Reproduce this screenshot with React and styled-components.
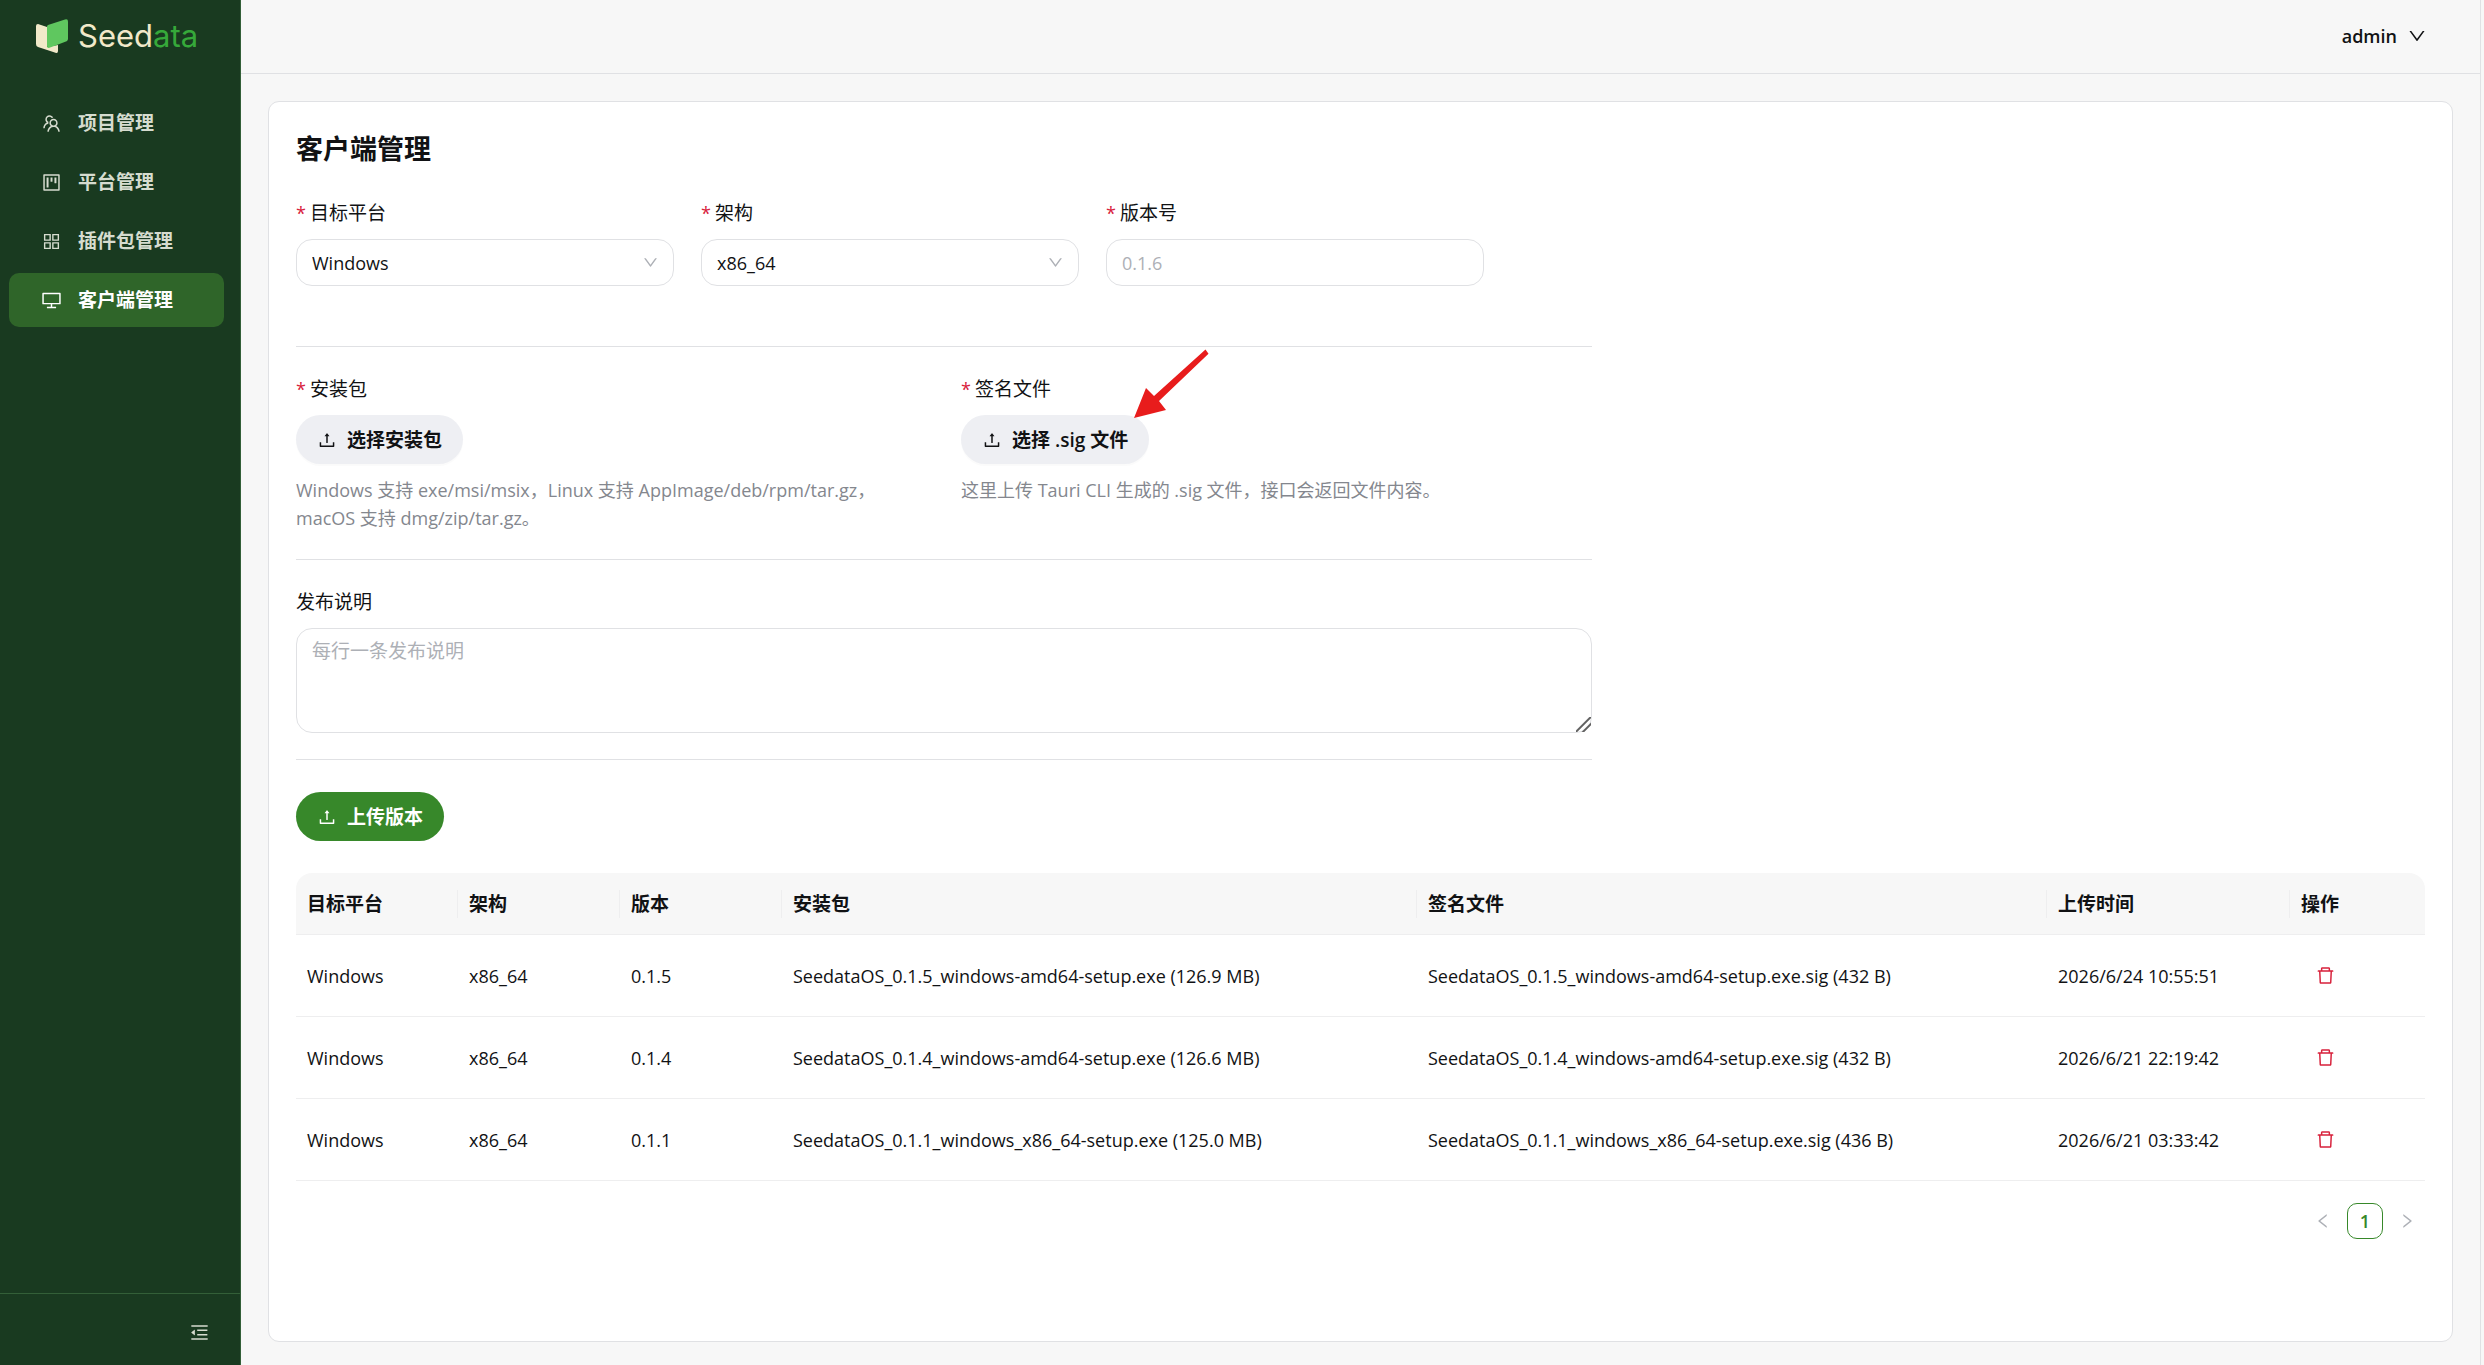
import React from "react";
import styled, { createGlobalStyle, css } from "styled-components";
import {
  AiOutlineTeam,
  AiOutlineProject,
  AiOutlineAppstore,
  AiOutlineDesktop,
  AiOutlineUpload,
  AiOutlineDelete,
  AiOutlineMenuFold,
  AiOutlineDown,
  AiOutlineLeft,
  AiOutlineRight,
} from "react-icons/ai";

const c = {
  sidebar: "#193a20",
  sidebarLine: "#335f38",
  active: "#2f6529",
  menuText: "#d6dccf",
  page: "#f7f7f7",
  line: "#e0e1e4",
  rowLine: "#eeeeef",
  text: "#111214",
  muted: "#84878e",
  placeholder: "#adb0b6",
  primary: "#37882a",
  danger: "#d8213b",
};

const Global = createGlobalStyle`
  * { box-sizing: border-box; }
  body {
    margin: 0;
    font-family: "Open Sans", "Noto Sans CJK SC", sans-serif;
    font-size: 18px;
    line-height: 28px;
    color: ${c.text};
    background: ${c.page};
  }
  button, input, select, textarea { font: inherit; color: inherit; }
`;

const Layout = styled.div`
  display: flex;
  min-height: 100vh;
`;

const Sidebar = styled.aside`
  display: flex;
  flex-direction: column;
  flex: none;
  width: 241px;
  background: ${c.sidebar};
  border-right: 1px solid ${c.sidebarLine};
`;

const Brand = styled.a`
  display: flex;
  align-items: center;
  gap: 10px;
  height: 72px;
  padding-left: 36px;
  color: #f1e9c9;
  font-family: Inter, "Open Sans", sans-serif;
  font-size: 31px;
  line-height: 36px;
  font-weight: 400;
  text-decoration: none;
`;

const BrandAccent = styled.span`
  color: #36a93a;
`;

const Menu = styled.nav`
  display: flex;
  flex-direction: column;
  flex: 1;
  gap: 5px;
  padding: 24px 16px 24px 9px;
`;

const MenuItem = styled.a`
  display: flex;
  align-items: center;
  gap: 16px;
  height: 54px;
  padding-left: 32px;
  border-radius: 10px;
  font-size: 19px;
  font-weight: 700;
  text-decoration: none;
  color: ${(p) => (p.$active ? "#ffffff" : c.menuText)};
  background: ${(p) => (p.$active ? c.active : "transparent")};
  svg { font-size: 21px; }
`;

const SidebarFooter = styled.div`
  display: flex;
  align-items: center;
  justify-content: flex-end;
  height: 72px;
  padding: 5px 30px 0 0;
  border-top: 1px solid ${c.sidebarLine};
`;

const IconButton = styled.button`
  display: inline-flex;
  align-items: center;
  justify-content: center;
  padding: 0;
  border: 0;
  background: none;
  cursor: pointer;
  color: ${(p) => p.$color};
  font-size: 21px;
`;

const Page = styled.div`
  display: flex;
  flex-direction: column;
  flex: 1;
  min-width: 0;
  margin-right: 3px;
  border-right: 1px solid ${c.line};
`;

const Header = styled.header`
  display: flex;
  align-items: center;
  justify-content: flex-end;
  height: 74px;
  padding: 0 53px 2px 0;
  border-bottom: 1px solid ${c.line};
`;

const UserButton = styled.button`
  display: flex;
  align-items: center;
  gap: 10px;
  padding: 0;
  border: 0;
  background: none;
  font-weight: 600;
  cursor: pointer;
  svg { font-size: 20px; }
`;

const Card = styled.main`
  flex: 1;
  margin: 27px 27px 23px 27px;
  padding: 30px 27px;
  background: #ffffff;
  border: 1px solid ${c.line};
  border-radius: 11px;
`;

const Title = styled.h1`
  margin: 0;
  font-size: 27px;
  line-height: 34px;
  font-weight: 700;
`;

const Form = styled.form`
  max-width: 1296px;
`;

const Section = styled.section`
  padding: ${(p) => p.$pad};
  border-bottom: 1px solid ${c.line};
`;

const Triple = styled.div`
  display: grid;
  grid-template-columns: repeat(3, minmax(0, 378px));
  column-gap: 27px;
`;

const Pair = styled.div`
  display: grid;
  grid-template-columns: repeat(2, minmax(0, 1fr));
  column-gap: 34px;
`;

const Field = styled.div`
  position: relative;
  display: flex;
  flex-direction: column;
  align-items: ${(p) => (p.$start ? "flex-start" : "stretch")};
  gap: 12px;
`;

const Label = styled.label`
  font-size: 19px;
  line-height: 28px;
  ${(p) =>
    p.$required &&
    css`
      &::before {
        content: "*";
        margin-right: 4px;
        color: ${c.danger};
        font-size: 18px;
      }
    `}
`;

const boxed = css`
  width: 100%;
  border: 1px solid ${c.line};
  border-radius: 16px;
  background: #ffffff;
  outline: none;
  &::placeholder { color: ${c.placeholder}; opacity: 1; }
`;

const SelectWrap = styled.div`
  display: grid;
  align-items: center;
  > * { grid-area: 1 / 1; }
  > svg {
    justify-self: end;
    margin-right: 15px;
    font-size: 17px;
    color: ${c.placeholder};
    pointer-events: none;
  }
`;

const Select = styled.select`
  ${boxed}
  height: 47px;
  padding: 0 44px 0 15px;
  appearance: none;
`;

const Input = styled.input`
  ${boxed}
  height: 47px;
  padding: 0 15px;
`;

const TextArea = styled.textarea`
  ${boxed}
  display: block;
  height: 105px;
  padding: 8px 15px;
  font-size: 19px;
  resize: vertical;
  &::-webkit-resizer {
    background: linear-gradient(
      135deg,
      transparent 9px,
      #606060 10px,
      #606060 11px,
      transparent 12px,
      transparent 14px,
      #606060 15px,
      #606060 16px,
      transparent 17px
    );
  }
`;

const Button = styled.button`
  display: inline-flex;
  align-items: center;
  gap: 10px;
  height: 49px;
  padding: 0 21px;
  border: 0;
  border-radius: 25px;
  font-size: 19px;
  font-weight: 600;
  cursor: pointer;
  color: ${(p) => (p.$primary ? "#ffffff" : c.text)};
  background: ${(p) => (p.$primary ? c.primary : "#eeeff3")};
  box-shadow: ${(p) => (p.$primary ? "none" : "0 2px 1px rgba(0, 0, 0, 0.02)")};
  svg { font-size: 20px; }
`;

const Help = styled.p`
  margin: 0;
  color: ${c.muted};
`;

const Pointer = styled.svg`
  position: absolute;
  left: 172px;
  top: -26px;
  width: 76px;
  height: 70px;
  pointer-events: none;
`;

const Submit = styled.div`
  padding: 32px 0;
`;

const Table = styled.table`
  width: 100%;
  table-layout: fixed;
  border-collapse: separate;
  border-spacing: 0;
`;

const Th = styled.th`
  height: 62px;
  padding: 0;
  text-align: left;
  font-size: 19px;
  font-weight: 700;
  background: ${c.page};
  border-bottom: 1px solid ${c.rowLine};
  &:first-child { border-top-left-radius: 16px; }
  &:last-child { border-top-right-radius: 16px; }
`;

const ThInner = styled.div`
  padding-left: 11px;
  border-right: ${(p) => (p.$last ? "0" : `1px solid ${c.rowLine}`)};
`;

const Td = styled.td`
  height: 82px;
  padding: 0 11px;
  border-bottom: 1px solid ${c.rowLine};
`;

const DeleteCell = styled(Td)`
  padding-left: 25px;
  line-height: 0;
`;

const Pagination = styled.nav`
  display: flex;
  justify-content: flex-end;
  gap: 6px;
  padding-top: 22px;
`;

const PageButton = styled.button`
  display: flex;
  align-items: center;
  justify-content: center;
  width: 36px;
  height: 36px;
  padding: 0;
  border: 1px solid ${(p) => (p.$current ? c.primary : "transparent")};
  border-radius: 10px;
  background: #ffffff;
  color: ${(p) => (p.$current ? c.primary : c.placeholder)};
  font-weight: 600;
  cursor: pointer;
  svg { font-size: 18px; }
`;

const menu = [
  { label: "项目管理", Icon: AiOutlineTeam },
  { label: "平台管理", Icon: AiOutlineProject },
  { label: "插件包管理", Icon: AiOutlineAppstore },
  { label: "客户端管理", Icon: AiOutlineDesktop, active: true },
];

const columns = [
  { title: "目标平台", width: "162px" },
  { title: "架构", width: "162px" },
  { title: "版本", width: "162px" },
  { title: "安装包", width: "635px" },
  { title: "签名文件" },
  { title: "上传时间", width: "243px" },
  { title: "操作", width: "135px" },
];

const rows = [
  ["Windows", "x86_64", "0.1.5", "SeedataOS_0.1.5_windows-amd64-setup.exe (126.9 MB)", "SeedataOS_0.1.5_windows-amd64-setup.exe.sig (432 B)", "2026/6/24 10:55:51"],
  ["Windows", "x86_64", "0.1.4", "SeedataOS_0.1.4_windows-amd64-setup.exe (126.6 MB)", "SeedataOS_0.1.4_windows-amd64-setup.exe.sig (432 B)", "2026/6/21 22:19:42"],
  ["Windows", "x86_64", "0.1.1", "SeedataOS_0.1.1_windows_x86_64-setup.exe (125.0 MB)", "SeedataOS_0.1.1_windows_x86_64-setup.exe.sig (436 B)", "2026/6/21 03:33:42"],
];

function LogoMark() {
  return (
    <svg width="32" height="34" viewBox="0 0 32 34" aria-hidden="true">
      <path d="M0 7Q0 5 2 5L11 8V28L22 26V32Q22 34.500 19.500 33.700L2 28Q0 27.300 0 25Z" fill="#f1e9c9" />
      <path d="M11 7.500Q11 6.500 12 6L29 .4Q32-.4 32 2.500V20Q32 21.500 30.600 22.200L13.500 28.800Q11 29.500 11 27Z" fill="#5fc75f" />
    </svg>
  );
}

function SelectField({ id, label, value }) {
  return (
    <Field>
      <Label htmlFor={id} $required>{label}</Label>
      <SelectWrap>
        <Select id={id} defaultValue={value}>
          <option>{value}</option>
        </Select>
        <AiOutlineDown />
      </SelectWrap>
    </Field>
  );
}

function FileField({ id, label, action, help, children }) {
  return (
    <Field $start>
      <Label htmlFor={id} $required>{label}</Label>
      <Button id={id} type="button">
        <AiOutlineUpload />
        <span>{action}</span>
      </Button>
      <Help>{help}</Help>
      {children}
    </Field>
  );
}

export default function App() {
  return (
    <Layout>
      <Global />
      <Sidebar>
        <Brand href="#">
          <LogoMark />
          <span>Seed<BrandAccent>ata</BrandAccent></span>
        </Brand>
        <Menu>
          {menu.map(({ label, Icon, active }) => (
            <MenuItem key={label} href="#" $active={active}>
              <Icon />
              {label}
            </MenuItem>
          ))}
        </Menu>
        <SidebarFooter>
          <IconButton type="button" $color={c.menuText} aria-label="收起菜单">
            <AiOutlineMenuFold />
          </IconButton>
        </SidebarFooter>
      </Sidebar>
      <Page>
        <Header>
          <UserButton type="button">
            admin
            <AiOutlineDown />
          </UserButton>
        </Header>
        <Card>
          <Title>客户端管理</Title>
          <Form onSubmit={(e) => e.preventDefault()}>
            <Section $pad="33px 0 60px">
              <Triple>
                <SelectField id="platform" label="目标平台" value="Windows" />
                <SelectField id="arch" label="架构" value="x86_64" />
                <Field>
                  <Label htmlFor="version" $required>版本号</Label>
                  <Input id="version" placeholder="0.1.6" />
                </Field>
              </Triple>
            </Section>
            <Section $pad="28px 0 27px">
              <Pair>
                <FileField
                  id="package"
                  label="安装包"
                  action="选择安装包"
                  help={<>Windows 支持 exe/msi/msix，Linux 支持 AppImage/deb/rpm/tar.gz，<br />macOS 支持 dmg/zip/tar.gz。</>}
                />
                <FileField
                  id="signature"
                  label="签名文件"
                  action="选择 .sig 文件"
                  help="这里上传 Tauri CLI 生成的 .sig 文件，接口会返回文件内容。"
                >
                  <Pointer viewBox="0 0 76 70" aria-hidden="true">
                    <path d="M72.500 .5L75.500 4.700L26 52L33 61L1 69L13 39L21 47Z" fill="#e81c1c" />
                  </Pointer>
                </FileField>
              </Pair>
            </Section>
            <Section $pad="28px 0 26px">
              <Field>
                <Label htmlFor="notes">发布说明</Label>
                <TextArea id="notes" placeholder="每行一条发布说明" />
              </Field>
            </Section>
            <Submit>
              <Button type="submit" $primary>
                <AiOutlineUpload />
                上传版本
              </Button>
            </Submit>
          </Form>
          <Table>
            <colgroup>
              {columns.map((col) => (
                <col key={col.title} width={col.width} />
              ))}
            </colgroup>
            <thead>
              <tr>
                {columns.map((col, i) => (
                  <Th key={col.title} scope="col">
                    <ThInner $last={i === columns.length - 1}>{col.title}</ThInner>
                  </Th>
                ))}
              </tr>
            </thead>
            <tbody>
              {rows.map((row) => (
                <tr key={row[2]}>
                  {row.map((cell, i) => (
                    <Td key={i}>{cell}</Td>
                  ))}
                  <DeleteCell>
                    <IconButton type="button" $color={c.danger} aria-label="删除">
                      <AiOutlineDelete />
                    </IconButton>
                  </DeleteCell>
                </tr>
              ))}
            </tbody>
          </Table>
          <Pagination aria-label="分页">
            <PageButton type="button" aria-label="上一页"><AiOutlineLeft /></PageButton>
            <PageButton type="button" $current aria-current="page">1</PageButton>
            <PageButton type="button" aria-label="下一页"><AiOutlineRight /></PageButton>
          </Pagination>
        </Card>
      </Page>
    </Layout>
  );
}
